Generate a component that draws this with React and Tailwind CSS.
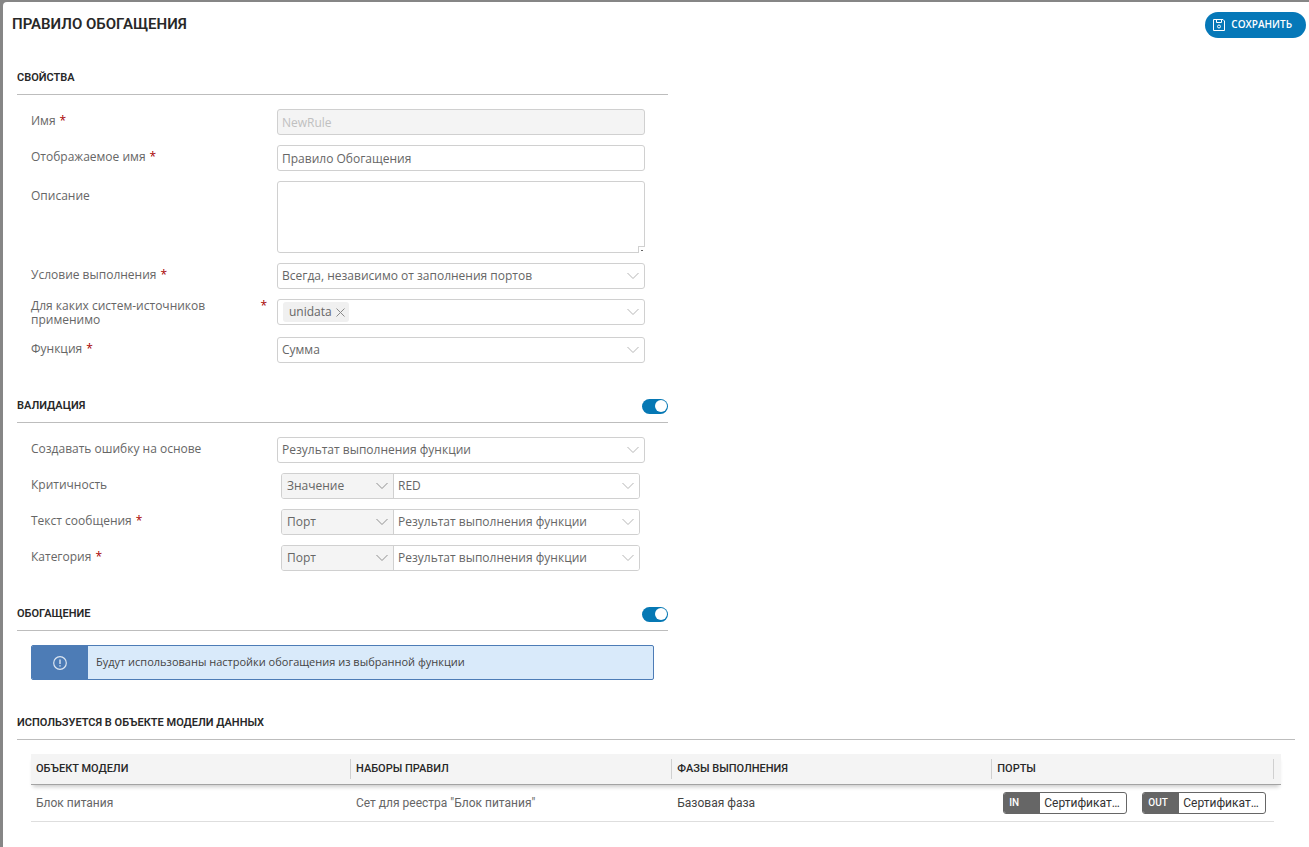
import { useState } from 'react'

const sourcePorts = [
  { type: 'IN', name: 'Сертификат…' },
  { type: 'OUT', name: 'Сертификат…' },
]

const usages = [
  { id: 1, model: 'Блок питания', sets: 'Сет для реестра "Блок питания"', phase: 'Базовая фаза', ports: sourcePorts },
]

const RESULT = 'Результат выполнения функции'

function Chevron({ className = '' }) {
  return (
    <svg viewBox="0 0 12 7" fill="none" stroke="currentColor"
      className={`pointer-events-none absolute top-1/2 -translate-y-1/2 w-3 h-[7px] ${className}`}>
      <path d="M0.5 0.5 L6 6 L11.5 0.5" />
    </svg>
  )
}

function SaveIcon() {
  return (
    <svg viewBox="0 0 12 12" fill="none" stroke="currentColor" className="w-3 h-3">
      <path d="M0.5 0.5 H10 L11.5 2 V11.5 H0.5 Z" />
      <path d="M3.5 0.5 V3.5 H8.5 V0.5" />
      <circle cx="6" cy="7.5" r="1.5" />
    </svg>
  )
}

function Row({ id, label, required, tall, children }) {
  return (
    <div className="flex items-start">
      <label htmlFor={id}
        className={`flex w-[246px] shrink-0 pr-[10px] leading-[14px] ${tall || ''}`}>
        <span>{label}</span>
        {required && <span className="ml-1 text-[#a80000]">*</span>}
      </label>
      <div className="flex-1 min-w-0">{children}</div>
    </div>
  )
}

function Select({ id, options }) {
  return (
    <div className="relative">
      <select id={id}
        className="block w-full h-[26px] appearance-none rounded-[3px] border border-[#d0d0d0] bg-white px-1 pr-6">
        {options.map(o => <option key={o}>{o}</option>)}
      </select>
      <Chevron className="right-[6px] text-[#b5b5b5]" />
    </div>
  )
}

function PairSelect({ id, label, kind, value }) {
  return (
    <div className="ml-1 mr-[5px] flex h-[26px] rounded-[3px] border border-[#d0d0d0]">
      <div className="relative w-28 shrink-0 border-r border-[#d0d0d0]">
        <select aria-label={`${label}: тип`} defaultValue={kind}
          className="block w-full h-6 appearance-none rounded-l-[2px] bg-[#f4f4f4] pl-[5px] pr-6">
          <option>Значение</option>
          <option>Порт</option>
        </select>
        <Chevron className="right-[5px] text-[#8f8f8f]" />
      </div>
      <div className="relative flex-1">
        <select id={id} className="block w-full h-6 appearance-none rounded-r-[2px] bg-white pl-1 pr-6">
          <option>{value}</option>
        </select>
        <Chevron className="right-[5px] text-[#b5b5b5]" />
      </div>
    </div>
  )
}

function Toggle({ label, checked, onChange }) {
  return (
    <input type="checkbox" role="switch" aria-label={label} checked={checked}
      onChange={e => onChange(e.target.checked)}
      className="flex w-[26px] h-[15px] appearance-none items-center rounded-full bg-gray-300 px-px checked:justify-end checked:bg-[#0678b4] before:block before:w-3 before:h-3 before:rounded-full before:bg-white" />
  )
}

function Section({ title, action, narrow, children }) {
  return (
    <section className={narrow ? 'w-full max-w-[651px]' : 'w-full'}>
      <div className="flex h-[26px] items-center justify-between border-b border-[#bdbdbd] pb-[7px]">
        <h2 className="font-[Roboto] text-[11px] font-semibold leading-[18px] text-[#282828]">{title}</h2>
        {action}
      </div>
      <div className="pt-[14px] pl-[14px]">{children}</div>
    </section>
  )
}

export default function App() {
  const [name, setName] = useState('Правило Обогащения')
  const [sources, setSources] = useState(['unidata'])
  const [validation, setValidation] = useState(true)
  const [enrichment, setEnrichment] = useState(true)

  return (
    <div className="min-h-screen flex bg-[#868686] pt-[2px] pl-[3px] font-['Open_Sans',sans-serif] text-xs text-[#666]">
      <main className="flex-1 min-w-0 rounded-tl-[4px] bg-white pt-[10px]">
        <header className="flex h-[26px] items-center justify-between pl-[9px] pr-[3px]">
          <h1 className="font-[Roboto] text-[15px] font-semibold text-[#282828]">ПРАВИЛО ОБОГАЩЕНИЯ</h1>
          <button type="button"
            className="flex h-[26px] items-center gap-[6px] rounded-full bg-[#0678b8] pl-2 pr-[14px] text-[10px] font-semibold text-white">
            <SaveIcon />
            СОХРАНИТЬ
          </button>
        </header>

        <div className="mt-[31px] flex flex-col gap-[34px] pl-[14px] pr-[14px] pb-6">
          <Section title="СВОЙСТВА" narrow>
            <div className="flex flex-col gap-[10px] pr-[23px]">
              <Row id="name" label="Имя" required tall="pt-[5px]">
                <input id="name" disabled value="NewRule"
                  className="block w-full h-[26px] rounded-[3px] border border-[#d0d0d0] bg-[#f4f4f4] px-1 text-[#c0c0c0]" />
              </Row>
              <Row id="display" label="Отображаемое имя" required tall="pt-[5px]">
                <input id="display" value={name} onChange={e => setName(e.target.value)}
                  className="block w-full h-[26px] rounded-[3px] border border-[#d0d0d0] px-1" />
              </Row>
              <Row id="description" label="Описание" tall="pt-2">
                <div className="relative">
                  <textarea id="description"
                    className="block w-full h-[72px] resize-none rounded-[3px] border border-[#d0d0d0] px-1" />
                  <span className="absolute right-0 bottom-0 flex w-[7px] h-[7px] items-center justify-center border-l border-t border-[#d0d0d0] bg-white">
                    <span className="w-[2px] h-px bg-[#666]" />
                  </span>
                </div>
              </Row>
              <Row id="condition" label="Условие выполнения" required tall="pt-[5px]">
                <Select id="condition" options={['Всегда, независимо от заполнения портов']} />
              </Row>
              <Row id="sources" label="Для каких систем-источников применимо" required>
                <div className="relative flex h-[26px] items-center gap-1 rounded-[3px] border border-[#d0d0d0] px-[5px]">
                  {sources.map(s => (
                    <span key={s} className="flex h-5 items-center gap-1 rounded-[3px] bg-[#f0f0f0] pl-[6px] pr-1">
                      {s}
                      <button type="button" aria-label={`Удалить ${s}`} className="text-[#8a8a8a]"
                        onClick={() => setSources(sources.filter(x => x !== s))}>
                        <svg viewBox="0 0 9 9" stroke="currentColor" className="block w-[9px] h-[9px]">
                          <path d="M0.5 0.5 L8.5 8.5 M8.5 0.5 L0.5 8.5" />
                        </svg>
                      </button>
                    </span>
                  ))}
                  <input id="sources" className="flex-1 min-w-0 h-5 outline-none" />
                  <Chevron className="right-[5px] text-[#b5b5b5]" />
                </div>
              </Row>
              <Row id="function" label="Функция" required tall="pt-[5px]">
                <Select id="function" options={['Сумма']} />
              </Row>
            </div>
          </Section>

          <Section title="ВАЛИДАЦИЯ" narrow
            action={<Toggle label="Валидация" checked={validation} onChange={setValidation} />}>
            <div className="flex flex-col gap-[10px] pr-[23px]">
              <Row id="error" label="Создавать ошибку на основе" tall="pt-[5px]">
                <Select id="error" options={[RESULT]} />
              </Row>
              <Row id="severity" label="Критичность" tall="pt-[5px]">
                <PairSelect id="severity" label="Критичность" kind="Значение" value="RED" />
              </Row>
              <Row id="message" label="Текст сообщения" required tall="pt-[5px]">
                <PairSelect id="message" label="Текст сообщения" kind="Порт" value={RESULT} />
              </Row>
              <Row id="category" label="Категория" required tall="pt-[5px]">
                <PairSelect id="category" label="Категория" kind="Порт" value={RESULT} />
              </Row>
            </div>
          </Section>

          <Section title="ОБОГАЩЕНИЕ" narrow
            action={<Toggle label="Обогащение" checked={enrichment} onChange={setEnrichment} />}>
            <div className="mr-[14px] flex h-[35px] overflow-hidden rounded-[2px] border border-[#4d7cb6] bg-[#d9eafa]">
              <div className="flex w-14 items-center justify-center bg-[#4d7cb6] text-[#dce6f2]">
                <svg viewBox="0 0 14 14" fill="none" stroke="currentColor" className="w-[14px] h-[14px]">
                  <circle cx="7" cy="7" r="6.3" strokeWidth="1.2" />
                  <path d="M7 3.5 V8 M7 9.2 V10.6" strokeWidth="1.4" />
                </svg>
              </div>
              <p className="flex items-center pl-2 text-[11px] text-[#444]">
                Будут использованы настройки обогащения из выбранной функции
              </p>
            </div>
          </Section>

          <Section title="ИСПОЛЬЗУЕТСЯ В ОБЪЕКТЕ МОДЕЛИ ДАННЫХ">
            <div className="pr-[14px]">
              <table className="w-full table-fixed border-separate border-spacing-0 font-[Roboto] text-xs">
                <colgroup>
                  <col className="w-[25.6%]" />
                  <col className="w-[25.7%]" />
                  <col className="w-[25.6%]" />
                  <col className="w-[22.5%]" />
                  <col />
                </colgroup>
                <thead className="bg-[#f4f4f4] text-left text-[11px] text-[#282828] shadow-[0_4px_4px_-2px_rgba(0,0,0,0.2)]">
                  <tr>
                    {['ОБЪЕКТ МОДЕЛИ', 'НАБОРЫ ПРАВИЛ', 'ФАЗЫ ВЫПОЛНЕНИЯ', 'ПОРТЫ'].map(h => (
                      <th key={h} className="border-b border-[#a3a3a3] p-0 py-[5px] font-medium">
                        <div className="h-5 border-r border-[#d0d0d0] pl-[5px] leading-5">{h}</div>
                      </th>
                    ))}
                    <td className="border-b border-[#a3a3a3]" />
                  </tr>
                </thead>
                <tbody>
                  {usages.map(row => (
                    <tr key={row.id}>
                      <td className="h-[37px] border-b border-[#dedede] p-0 pl-[5px]">{row.model}</td>
                      <td className="border-b border-[#dedede] p-0 pl-[5px]">{row.sets}</td>
                      <td className="border-b border-[#dedede] p-0 pl-[5px] text-[#444]">{row.phase}</td>
                      <td className="border-b border-[#dedede] p-0 pl-[11px]">
                        <div className="flex gap-[15px]">
                          {row.ports.map(p => (
                            <div key={p.type}
                              className="flex w-[124px] h-[22px] items-center overflow-hidden rounded-[3px] border border-[#666] bg-white">
                              <span className="flex w-9 h-full shrink-0 items-center bg-[#666] pl-[5px] text-[10px] font-medium text-white">
                                {p.type}
                              </span>
                              <span className="pl-1 text-[#333] whitespace-nowrap">{p.name}</span>
                            </div>
                          ))}
                        </div>
                      </td>
                      <td />
                    </tr>
                  ))}
                </tbody>
              </table>
            </div>
          </Section>
        </div>
      </main>
    </div>
  )
}
